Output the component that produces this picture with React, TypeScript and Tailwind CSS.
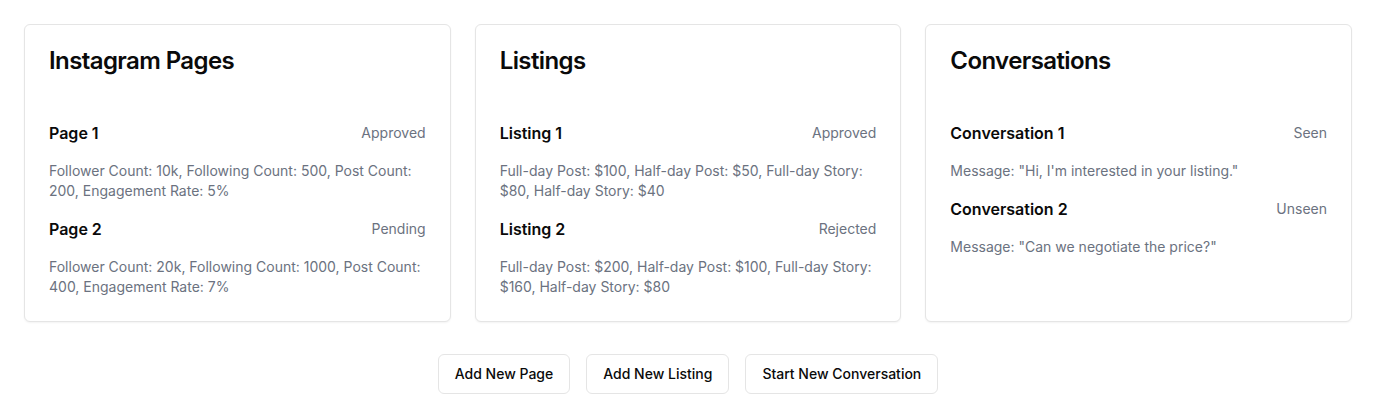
type Entry = { title: string; status: string; detail: string };
type Section = { heading: string; entries: Entry[] };

const sections: Section[] = [
  {
    heading: "Instagram Pages",
    entries: [
      { title: "Page 1", status: "Approved", detail: "Follower Count: 10k, Following Count: 500, Post Count: 200, Engagement Rate: 5%" },
      { title: "Page 2", status: "Pending", detail: "Follower Count: 20k, Following Count: 1000, Post Count: 400, Engagement Rate: 7%" },
    ],
  },
  {
    heading: "Listings",
    entries: [
      { title: "Listing 1", status: "Approved", detail: "Full-day Post: $100, Half-day Post: $50, Full-day Story: $80, Half-day Story: $40" },
      { title: "Listing 2", status: "Rejected", detail: "Full-day Post: $200, Half-day Post: $100, Full-day Story: $160, Half-day Story: $80" },
    ],
  },
  {
    heading: "Conversations",
    entries: [
      { title: "Conversation 1", status: "Seen", detail: "Message: \"Hi, I'm interested in your listing.\"" },
      { title: "Conversation 2", status: "Unseen", detail: "Message: \"Can we negotiate the price?\"" },
    ],
  },
];

const actions = ["Add New Page", "Add New Listing", "Start New Conversation"];

function Card({ heading, entries }: Section) {
  return (
    <section className="rounded-md border border-[#e5e5e5] bg-white shadow-xs">
      <div className="p-6">
        <h2 className="text-2xl leading-6 font-semibold tracking-tight">{heading}</h2>
      </div>
      <div className="flex flex-col gap-4 p-6">
        {entries.map((entry) => (
          <article key={entry.title} className="flex flex-col gap-4">
            <div className="flex items-center justify-between">
              <h3 className="text-base font-semibold">{entry.title}</h3>
              <span className="text-sm text-[#6b7280]">{entry.status}</span>
            </div>
            <p className="text-sm text-[#6b7280]">{entry.detail}</p>
          </article>
        ))}
      </div>
    </section>
  );
}

export default function App() {
  return (
    <main className="flex flex-col gap-8 bg-white p-6 font-['Inter',sans-serif] text-[#0a0a0a]">
      <div className="grid grid-cols-3 gap-6">
        {sections.map((section) => (
          <Card key={section.heading} {...section} />
        ))}
      </div>
      <div className="flex justify-center gap-4">
        {actions.map((label) => (
          <button
            key={label}
            type="button"
            className="h-10 rounded-md border border-[#e5e5e5] bg-white px-4 text-sm font-medium hover:bg-zinc-100"
          >
            {label}
          </button>
        ))}
      </div>
    </main>
  );
}
